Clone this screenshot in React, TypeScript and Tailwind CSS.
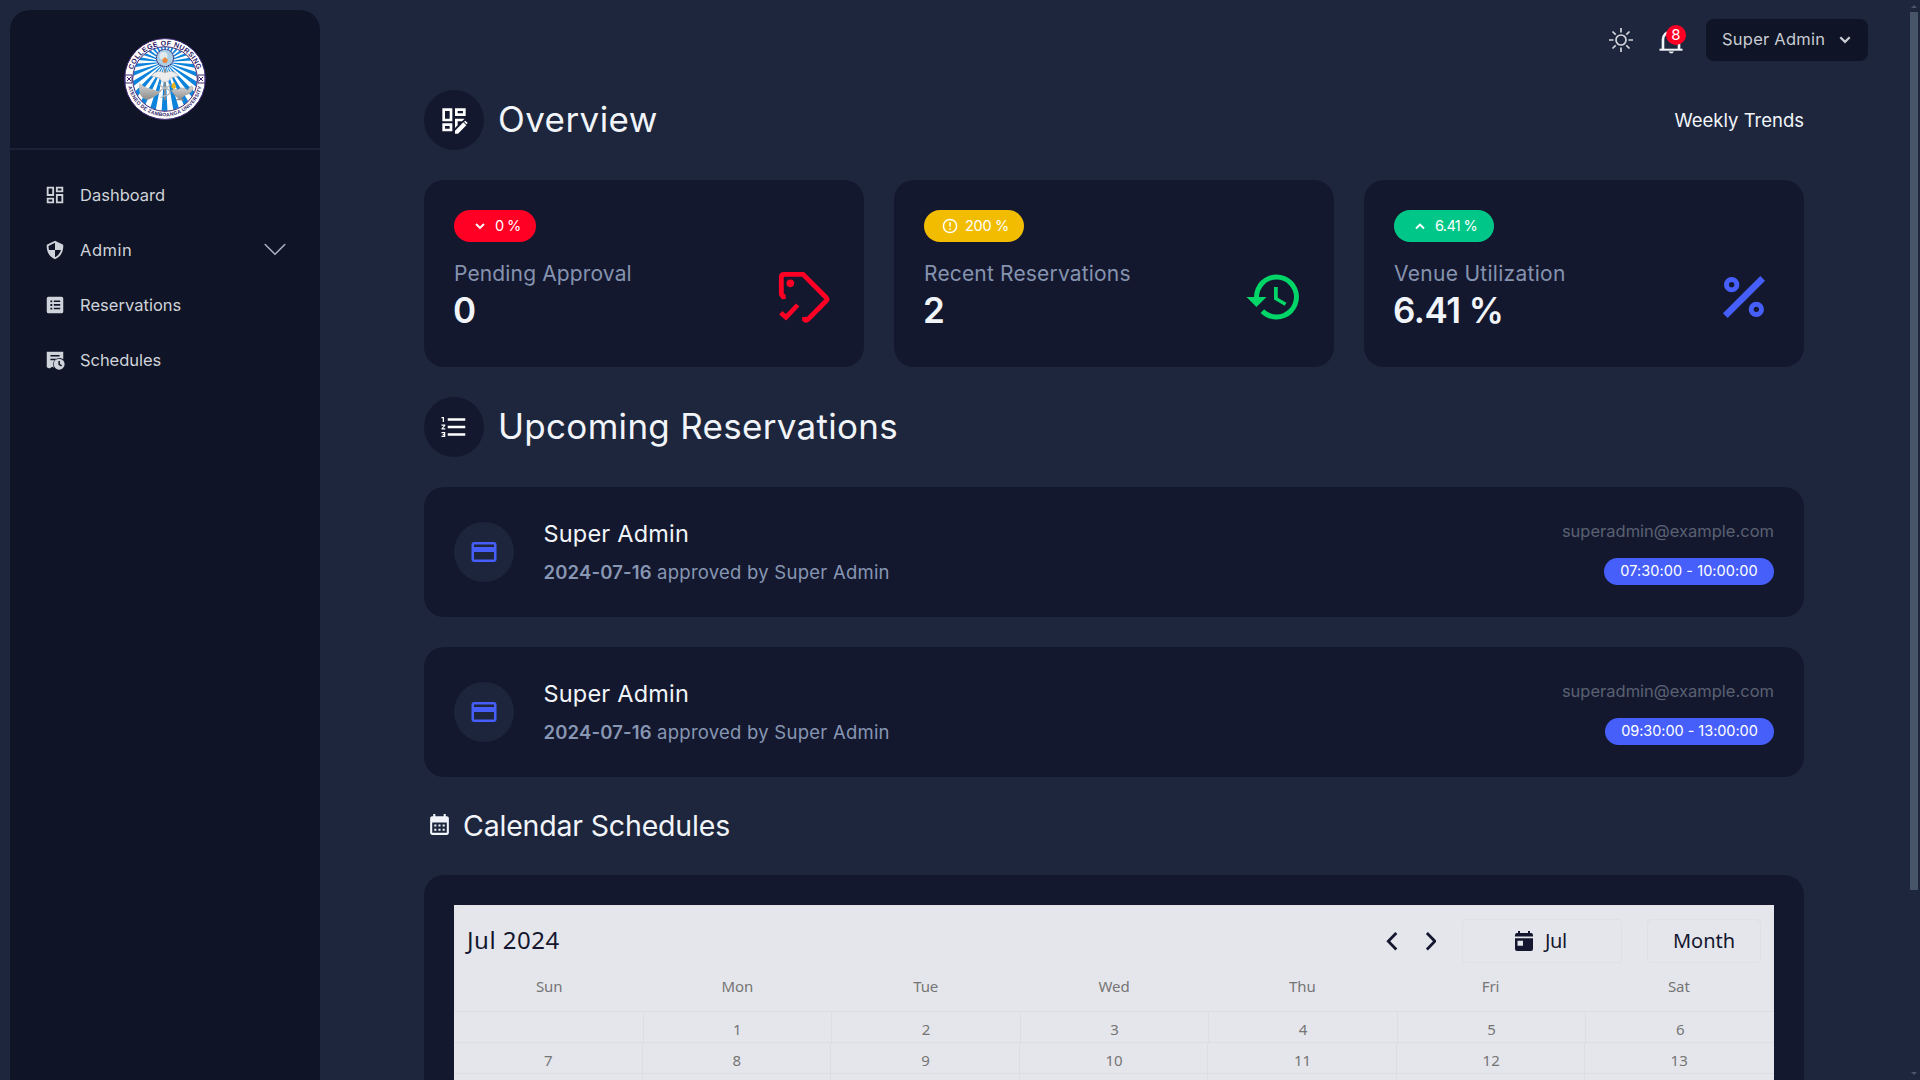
import React from 'react';

type IconProps = { size?: number; className?: string; vb?: string; children: React.ReactNode };

function Icon({ size = 24, className = '', vb = '0 0 24 24', children }: IconProps) {
  return (
    <svg width={size} height={size} viewBox={vb} fill="currentColor" fillRule="evenodd" className={`shrink-0 ${className}`}>
      {children}
    </svg>
  );
}

function Seal() {
  const rays = Array.from({ length: 26 }, (_, i) => {
    const a = (i / 26) * Math.PI * 2 + 0.07;
    const b = a + Math.PI / 26;
    return `M41 24L${41 + 70 * Math.cos(a)} ${24 + 70 * Math.sin(a)}L${41 + 70 * Math.cos(b)} ${24 + 70 * Math.sin(b)}Z`;
  }).join('');
  return (
    <svg width="82" height="82" viewBox="0 0 82 82">
      <defs>
        <clipPath id="disc"><circle cx="41" cy="41" r="32" /></clipPath>
        <linearGradient id="metal" x1="0" y1="0" x2="0" y2="1">
          <stop offset="0" stopColor="#d6d6d6" />
          <stop offset="1" stopColor="#8d8d8d" />
        </linearGradient>
        <path id="arcTop" d="M7.6 41a33.4 33.4 0 0 1 66.8 0" />
        <path id="arcBottom" d="M3.6 41a37.4 37.4 0 0 0 74.8 0" />
      </defs>
      <circle cx="41" cy="41" r="40.4" fill="#fff" stroke="#3d2673" strokeWidth="1" />
      <g clipPath="url(#disc)">
        <rect width="82" height="82" fill="#fff" />
        <path d={rays} fill="#0c84dc" />
      </g>
      <circle cx="41" cy="41" r="32.3" fill="none" stroke="#3d2673" strokeWidth="1" />
      <circle cx="41" cy="20" r="8.6" fill="#a9cfe6" stroke="#4a3a80" strokeWidth="1.2" strokeDasharray="1.6 .6" />
      <circle cx="39.5" cy="18" r="4" fill="#dfe9ee" />
      <path d="M38 22l3-3 3 3-1.500 3h-3z" fill="#e8873a" />
      <path d="M41 31v31" stroke="#8b8b8b" strokeWidth="1.8" />
      <path d="M27 38c5-6 10-5 14-3 4-2 9-3 14 3-4 0-6 2-9 2 0 3-3 4-5 4s-5-1-5-4c-3 0-5-2-9-2z" fill="#ededed" stroke="#b5b5b5" strokeWidth=".6" />
      <path d="M36 46c0 5 10 3 10 8s-9 3-9 6M46 46c0 5-10 3-10 8" fill="none" stroke="#b9b9b9" strokeWidth="1.400" />
      <path d="M15 45l6 4 13 4h3c-3 4-7 6-11 8-4 2-8-1-10-5-1-4-1-8-1-11z" fill="url(#metal)" />
      <path d="M47 52c5 0 8-1 10-2 3 0 5 1 7 2 1-4 5-5 5-2s-3 6-8 7c-1 2-3 3-4 3l3 2H52l3-2c-4-1-6-5-8-8z" fill="url(#metal)" stroke="#858585" strokeWidth=".5" />
      <path d="M50 51c-4-1-3-4 0-7 2 3 3 6 0 7z" fill="#e9b31a" />
      <g fill="#2f1a68" fontFamily="Liberation Sans, sans-serif" fontWeight="700">
        <text fontSize="7">
          <textPath href="#arcTop" startOffset="50%" textAnchor="middle" textLength="86">COLLEGE OF NURSING</textPath>
        </text>
        <text fontSize="5">
          <textPath href="#arcBottom" startOffset="50%" textAnchor="middle" textLength="102">ATENEO DE ZAMBOANGA UNIVERSITY</textPath>
        </text>
      </g>
      <g fill="none" stroke="#3d2673" strokeWidth="1">
        <path d="M1 37h7v8H1zM3 39l4 4M7 39l-4 4M74 37h7v8h-7zM75 39l4 4M79 39l-4 4" />
      </g>
    </svg>
  );
}

const navItems = [
  {
    label: 'Dashboard',
    tracking: 'tracking-normal',
    icon: <path d="M19 5v2h-4V5h4M9 5v6H5V5h4m10 8v6h-4v-6h4M9 17v2H5v-2h4M21 3h-8v6h8V3zM11 3H3v10h8V3zm10 8h-8v10h8V11zm-10 4H3v6h8v-6z" />,
  },
  {
    label: 'Admin',
    tracking: 'tracking-[0.5px]',
    chevron: true,
    icon: (
      <path d="M20.995 6.900a.998.998 0 0 0-.548-.795l-8-4a1 1 0 0 0-.895 0l-8 4a1.002 1.002 0 0 0-.547.795c-.011.107-.961 10.767 8.589 15.014a.987.987 0 0 0 .812 0c9.550-4.247 8.600-14.906 8.589-15.014zM12 19.897V12H5.510a15.473 15.473 0 0 1-.544-4.365L12 4.118V12h6.460c-.759 2.740-2.498 5.979-6.460 7.897z" />
    ),
  },
  {
    label: 'Reservations',
    tracking: 'tracking-[0.03px]',
    icon: (
      <path d="M5 3h14a2 2 0 0 1 2 2v14a2 2 0 0 1-2 2H5a2 2 0 0 1-2-2V5a2 2 0 0 1 2-2zM7 7v2h2V7zM7 11v2h2v-2zM7 15v2h2v-2zM10.700 7v1.700h7V7zM10.700 11v1.700h7V11zM10.700 15v1.700h7V15z" />
    ),
  },
  {
    label: 'Schedules',
    tracking: 'tracking-[-0.05px]',
    icon: (
      <>
        <path d="M3 3h18v8.200A7 7 0 0 0 11 20.500L9 19.300l-3 2-3-1.500zM7 6.500v1.800h10V6.500zM7 10.500v1.800h5.500l1.500-1.800z" />
        <path d="M16.500 10.500a6 6 0 1 1 0 12 6 6 0 0 1 0-12zm-.8 2.500v4.200l3 2 1-1.400-2.300-1.500V13z" />
      </>
    ),
  },
];

function Sidebar() {
  return (
    <aside className="mt-2.5 ml-2.5 h-[1080px] w-[310px] shrink-0 rounded-t-[20px] bg-[#0f1526]">
      <div className="flex h-[140px] justify-center border-b-2 border-[#1b2236] pt-[28px]">
        <Seal />
      </div>
      <nav className="pt-[17px]">
        {navItems.map((n) => (
          <div key={n.label} className="flex h-[55px] items-center pr-[34px] pl-[34px] text-[#cfd3da]">
            <Icon size={22}>{n.icon}</Icon>
            <span className={`ml-[14px] flex-1 pt-[2px] text-[16.5px] ${n.tracking}`}>{n.label}</span>
            {n.chevron && (
              <svg width="22" height="13" viewBox="0 0 22 13" fill="none" stroke="#a9afbb" strokeWidth="1.600" strokeLinecap="round" strokeLinejoin="round">
                <path d="M1.200 1.500l9.800 9.800 9.800-9.800" />
              </svg>
            )}
          </div>
        ))}
      </nav>
    </aside>
  );
}

function TopBar() {
  return (
    <header className="flex h-20 items-center justify-end pr-10">
      <svg width="24" height="24" viewBox="0 0 24 24" fill="none" stroke="#d3d6dc" strokeWidth="1.700">
        <circle cx="12" cy="12" r="5" />
        <path d="M12 0v4.500M12 19.500V24M0 12h4.500M19.500 12H24M3.500 3.500l3.200 3.200M17.300 17.300l3.200 3.200M3.500 20.500l3.200-3.200M17.300 6.700l3.200-3.200" />
      </svg>
      <div className="relative ml-[26px] h-7 w-6">
        <svg width="24" height="28" viewBox="0 0 24 28" className="text-[#f1f5f9]" fill="none" stroke="currentColor">
          <path d="M4 24V13.500C4 9 7.500 5.500 12 5.500s8 3.500 8 8V24" strokeWidth="2.600" />
          <path d="M0.500 23.700h23" strokeWidth="2" />
          <path d="M9.500 25.500h5.500l-1.500 1.800h-2.500z" fill="currentColor" stroke="none" />
        </svg>
        <span className="absolute -top-[1px] left-[7px] flex h-5 w-5 items-center justify-center rounded-full bg-[#ff0024] text-[15px] leading-5 text-white">8</span>
      </div>
      <button className="ml-[23px] flex h-[42px] w-[162px] items-center justify-between rounded-lg bg-[#0f1526] pr-[17px] pl-4 text-[#c9ccd3]">
        <span className="pb-px text-[16.5px] tracking-[0.24px]">Super Admin</span>
        <svg width="12" height="8" viewBox="0 0 12 8" fill="none" stroke="currentColor" strokeWidth="2.200">
          <path d="M1.300 1.200L6 5.900l4.700-4.700" />
        </svg>
      </button>
    </header>
  );
}

function SectionHead({ icon, title, tracking, right }: { icon: React.ReactNode; title: string; tracking: string; right?: React.ReactNode }) {
  return (
    <div className="flex h-[60px] items-center text-[#f1f5f9]">
      <span className="flex h-[60px] w-[60px] items-center justify-center rounded-full bg-[#14182f] text-white">{icon}</span>
      <h2 className={`ml-[14px] flex-1 pb-[3px] text-[35px] leading-[44px] font-normal ${tracking}`}>{title}</h2>
      {right}
    </div>
  );
}

function Chevron({ up }: { up?: boolean }) {
  return (
    <svg width="10" height="7" viewBox="0 0 10 7" fill="none" stroke="white" strokeWidth="1.900" className="mx-[3px]">
      <path d={up ? 'M1 5.500l4-4 4 4' : 'M1 1l4 4 4-4'} />
    </svg>
  );
}

const stats = [
  {
    badge: '0 %', badgeClass: 'bg-[#ff0024] w-[82px] tracking-[-0.6px]', badgeIcon: <Chevron />,
    label: 'Pending Approval', labelClass: 'tracking-[0.14px]', value: '0', color: 'text-[#ff0024]', vb: '0 0 180 180',
    icon: (
      <>
        <path d="M35 88l-8 1-5-7V30q0-8 8-8h57l70 70q4 5 0 9l-56 57q-4 4-9 0l-1-8" fill="none" stroke="currentColor" strokeWidth="14.500" />
        <circle cx="49" cy="49" r="11.500" />
        <path d="M20 137l16 14 35-37" fill="none" stroke="currentColor" strokeWidth="14" />
      </>
    ),
  },
  {
    badge: '200 %', badgeClass: 'bg-[#f2bc00] w-[100px] tracking-[-0.3px]',
    badgeIcon: (
      <svg width="16" height="16" viewBox="0 0 16 16" fill="none" stroke="white" strokeWidth="1.500">
        <circle cx="8" cy="8" r="6.600" />
        <path d="M8 4.200v4.600M8 10.300v1.500" />
      </svg>
    ),
    label: 'Recent Reservations', labelClass: 'tracking-[0.17px]', value: '2', color: 'text-[#00d668]', vb: '0 0 24 24',
    icon: (
      <path d="M13.500 8H12v5l4.280 2.540.72-1.210-3.500-2.080zM13 3a9 9 0 0 0-9 9H1l3.960 4.030L9 12H6a7 7 0 0 1 7-7 7 7 0 0 1 7 7 7 7 0 0 1-7 7c-1.930 0-3.680-.79-4.940-2.060l-1.420 1.420A8.896 8.896 0 0 0 13 21a9 9 0 0 0 0-18" />
    ),
  },
  {
    badge: '6.41 %', badgeClass: 'bg-[#00c787] w-[100px] tracking-[-0.65px]', badgeIcon: <Chevron up />,
    label: 'Venue Utilization', labelClass: 'tracking-[0.29px]', value: '6.41 %', color: 'text-[#465ffb]', vb: '0 0 180 180',
    icon: (
      <g fill="none" stroke="currentColor">
        <circle cx="53" cy="53" r="15.500" strokeWidth="15" />
        <circle cx="127" cy="127" r="15.500" strokeWidth="15" />
        <path d="M34 146L146 34" strokeWidth="20" />
      </g>
    ),
  },
];

const paymentPath = 'M20 4H4c-1.110 0-1.990.89-1.990 2L2 18c0 1.110.89 2 2 2h16c1.110 0 2-.89 2-2V6c0-1.110-.89-2-2-2zm0 14H4v-6h16v6zm0-10H4V6h16v2z';

function Reservation({ time, pill }: { time: string; pill: string }) {
  return (
    <div className="mt-[30px] flex h-[130px] items-center rounded-[20px] bg-[#14182f] px-[30px]">
      <span className="flex h-[60px] w-[60px] items-center justify-center rounded-full bg-[#1c253c] text-[#465ffb]">
        <Icon size={30}><path d={paymentPath} /></Icon>
      </span>
      <div className="ml-[29.5px] flex-1 pt-[2px] leading-[39px]">
        <p className="text-[23.5px] tracking-[0.2px] text-[#f1f5f9]">Super Admin</p>
        <p className="text-[18.5px] tracking-[0.24px] text-[#8796b2]"><b className="font-semibold tracking-[0.15px]">2024-07-16</b> approved by Super Admin</p>
      </div>
      <div className="flex h-[78px] flex-col items-end">
        <p className="text-[16.5px] leading-[36px] text-[#5a6172]">superadmin@example.com</p>
        <p className={`mt-[9px] h-[27px] rounded-full bg-[#465ffb] text-center text-[14.5px] leading-[26px] text-white ${pill}`}>{time}</p>
      </div>
    </div>
  );
}

const weekdays = ['Sun', 'Mon', 'Tue', 'Wed', 'Thu', 'Fri', 'Sat'];
const weeks = [
  ['', '1', '2', '3', '4', '5', '6'],
  ['7', '8', '9', '10', '11', '12', '13'],
];

function Calendar() {
  return (
    <div className="h-[300px] rounded-t-[20px] bg-[#14182f] p-[30px]">
      <div className="h-[270px] bg-[#e5e6eb] font-['Noto_Sans',sans-serif] text-[#757575]">
        <div className="rounded-t-xl border border-b-0 border-[#e2e2e6]">
          <div className="flex h-[57px] items-start pt-[12.5px] pr-3 pl-3 text-[#14172f]">
            <span className="flex-1 text-[24px] leading-[42px] tracking-[0.5px]">Jul 2024</span>
            <svg width="50" height="44" viewBox="0 0 50 44" fill="none" stroke="currentColor" strokeWidth="2.800">
              <path d="M10.300 14l-8 8.200 8 8.200M40.900 14l8 8.200-8 8.200" />
            </svg>
            <div className="ml-[26px] flex h-11 w-40 items-center rounded border border-[#e0e0e2] pt-px pl-[49px] text-[20px]">
              <Icon size={24}>
                <path d="M5 4h1V2h2v2h8V2h2v2h1a2 2 0 0 1 2 2v1.600H3V6a2 2 0 0 1 2-2zM3 9.200h18V20a2 2 0 0 1-2 2H5a2 2 0 0 1-2-2zM5.500 11.800v5h5.500v-5z" />
              </Icon>
              <span className="ml-[9px] tracking-[-0.4px]">Jul</span>
            </div>
            <div className="ml-[25px] flex h-11 w-[114px] items-center justify-center rounded border border-[#e0e0e2] pt-px text-[20px]">Month</div>
          </div>
          <div className="grid h-12 grid-cols-7 text-center text-[15px] leading-[46px] tracking-[-0.1px]">
            {weekdays.map((d) => <span key={d}>{d}</span>)}
          </div>
        </div>
        <div className="grid h-[31px] grid-cols-7 border-t border-[#dedee0] text-center text-[15px] leading-[34px]">
          {weeks[0].map((d, i) => (
            <span key={i} className={i > 0 ? 'h-[30px] border-l border-[#dedee0]' : 'h-[30px]'}>{d}</span>
          ))}
        </div>
        <div className="grid h-[31px] grid-cols-7 border-t border-[#dedee0] text-center text-[15px] leading-[34px]">
          {weeks[1].map((d, i) => (
            <span key={i} className={i < 6 ? 'h-[30px] border-r border-[#dedee0] pl-px' : 'h-[30px] pr-px'}>{d}</span>
          ))}
        </div>
        <div className="grid h-[31px] grid-cols-7 border-t border-[#dedee0]">
          {weekdays.map((d, i) => (
            <span key={d} className={i < 6 ? 'h-[30px] border-r border-[#dedee0]' : 'h-[30px]'} />
          ))}
        </div>
      </div>
    </div>
  );
}

export default function App() {
  return (
    <div className="flex h-[1080px] w-[1920px] overflow-hidden bg-[#1e263d] font-[Inter,sans-serif]">
      <Sidebar />
      <main className="flex-1">
        <TopBar />
        <div className="mt-2.5 ml-[104px] w-[1380px]">
          <SectionHead
            title="Overview"
            tracking="tracking-[0.43px]"
            icon={
              <Icon size={30} vb="0 0 90 90">
                <path d="M10 10h30v39H10zM18 18v23h14V18zM48 10h32v23H48zM56 18v7h16v-7zM10 55h30v24H10zM18 63v8h14v-8z" />
                <path d="M48 41h29l-8 8H56v12l-8 8zM48 86v-9l25-25 9 9-25 25zM75 50l4-3 7 7-3 4z" />
              </Icon>
            }
            right={<span className="pt-[2px] text-[18.5px]">Weekly Trends</span>}
          />
          <section className="mt-[30px] grid grid-cols-3 gap-[30px]">
            {stats.map((s) => (
              <div key={s.label} className="h-[187px] rounded-[20px] bg-[#14182f] p-[30px]">
                <div className={`flex h-8 items-center rounded-full pl-[18px] text-[14.5px] text-white ${s.badgeClass}`}>
                  {s.badgeIcon}
                  <span className="ml-[7px]">{s.badge}</span>
                </div>
                <div className="mt-5 flex h-[70px] items-center justify-between">
                  <div>
                    <p className={`h-6 text-[21px] leading-6 text-[#8593ae] ${s.labelClass}`}>{s.label}</p>
                    <p className="-ml-px h-[46px] text-[35px] leading-[48px] font-semibold tracking-[-0.5px] text-[#f1f5f9]">{s.value}</p>
                  </div>
                  <Icon size={60} vb={s.vb} className={s.color}>{s.icon}</Icon>
                </div>
              </div>
            ))}
          </section>
          <div className="mt-[30px]">
            <SectionHead
              title="Upcoming Reservations"
              tracking="tracking-[0.3px]"
              icon={
                <Icon size={30}>
                  <path d="M2 17h2v.5H3v1h1v.5H2v1h3v-4H2v1zm1-9h1V4H2v1h1v3zm-1 3h1.800L2 13.100v.9h3v-1H3.200L5 10.900V10H2v1zm5-6v2h14V5H7zm0 14h14v-2H7v2zm0-6h14v-2H7v2z" />
                </Icon>
              }
            />
          </div>
          <Reservation time="07:30:00 - 10:00:00" pill="w-[170px] tracking-[0.07px]" />
          <Reservation time="09:30:00 - 13:00:00" pill="w-[169px] tracking-[-0.05px]" />
          <div className="flex h-[98px] items-center pl-[3px] text-[#f1f5f9]">
            <Icon size={25} className="mb-[3px]">
              <path d="M19 4h-1V2h-2v2H8V2H6v2H5c-1.110 0-1.990.9-1.990 2L3 20a2 2 0 0 0 2 2h14c1.100 0 2-.9 2-2V6c0-1.100-.9-2-2-2zm0 16H5V10h14v10zM9 14H7v-2h2v2zm4 0h-2v-2h2v2zm4 0h-2v-2h2v2zm-8 4H7v-2h2v2zm4 0h-2v-2h2v2zm4 0h-2v-2h2v2z" />
            </Icon>
            <h3 className="ml-[11px] pt-px text-[28.5px] tracking-[-0.18px]">Calendar Schedules</h3>
          </div>
          <Calendar />
        </div>
      </main>
      <div className="flex w-[12px] flex-col items-center justify-between pr-[2px] pl-[2px]">
        <div className="flex w-full flex-col items-center">
          <div className="mt-[5px] h-0 w-0 border-x-[3px] border-b-[3px] border-x-transparent border-b-[#475569]" />
          <div className="mt-[4px] h-[878px] w-2 bg-[#475569]" />
        </div>
        <div className="mb-[5px] h-0 w-0 border-x-[3px] border-t-[3px] border-x-transparent border-t-[#475569]" />
      </div>
    </div>
  );
}
